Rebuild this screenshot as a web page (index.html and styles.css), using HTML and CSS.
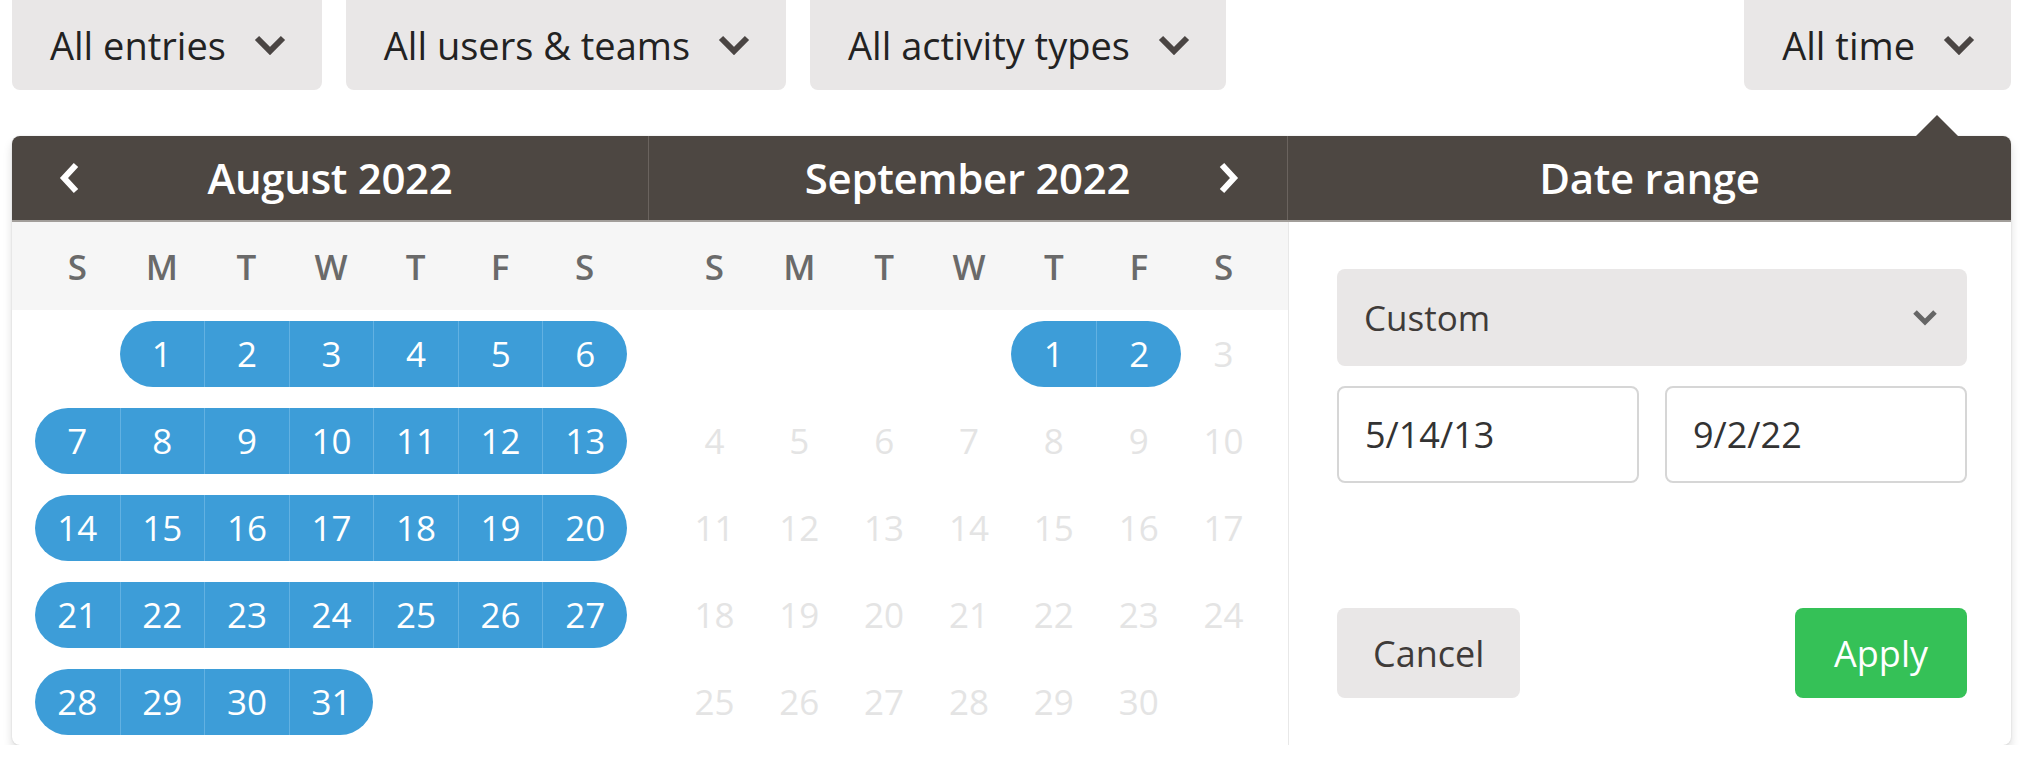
FILE: index.html
```html
<!DOCTYPE html>
<html lang="en">
<head>
<meta charset="utf-8">
<title>Date range filter</title>
<link rel="stylesheet" href="styles.css">
</head>
<body>
<div class="page">
  <div class="toolbar">
    <button class="filter">All entries<svg class="chev" viewBox="0 0 34 20"><polyline points="4,3 17,16 30,3"/></svg></button>
    <button class="filter">All users &amp; teams<svg class="chev" viewBox="0 0 34 20"><polyline points="4,3 17,16 30,3"/></svg></button>
    <button class="filter">All activity types<svg class="chev" viewBox="0 0 34 20"><polyline points="4,3 17,16 30,3"/></svg></button>
    <button class="filter filter-time">All time<svg class="chev" viewBox="0 0 34 20"><polyline points="4,3 17,16 30,3"/></svg></button>
  </div>

  <div class="popover">
    <div class="pop-head">
      <div class="head-cell head-aug">
        <svg class="nav" viewBox="0 0 24 34"><polyline points="18,4 6,17 18,30"/></svg>
        <span class="head-title">August 2022</span>
        <span class="nav-space"></span>
      </div>
      <div class="head-cell head-sep">
        <span class="nav-space"></span>
        <span class="head-title">September 2022</span>
        <svg class="nav" viewBox="0 0 24 34"><polyline points="6,4 18,17 6,30"/></svg>
      </div>
      <div class="head-cell head-range">
        <span class="head-title">Date range</span>
      </div>
    </div>

    <div class="pop-body">
      <div class="month month-aug">
        <div class="weekdays"><span>S</span><span>M</span><span>T</span><span>W</span><span>T</span><span>F</span><span>S</span></div>
        <div class="days">
          <span class="day"></span>
          <span class="day sel start"><b>1</b></span>
          <span class="day sel"><b>2</b></span>
          <span class="day sel"><b>3</b></span>
          <span class="day sel"><b>4</b></span>
          <span class="day sel"><b>5</b></span>
          <span class="day sel end"><b>6</b></span>

          <span class="day sel start"><b>7</b></span>
          <span class="day sel"><b>8</b></span>
          <span class="day sel"><b>9</b></span>
          <span class="day sel"><b>10</b></span>
          <span class="day sel"><b>11</b></span>
          <span class="day sel"><b>12</b></span>
          <span class="day sel end"><b>13</b></span>

          <span class="day sel start"><b>14</b></span>
          <span class="day sel"><b>15</b></span>
          <span class="day sel"><b>16</b></span>
          <span class="day sel"><b>17</b></span>
          <span class="day sel"><b>18</b></span>
          <span class="day sel"><b>19</b></span>
          <span class="day sel end"><b>20</b></span>

          <span class="day sel start"><b>21</b></span>
          <span class="day sel"><b>22</b></span>
          <span class="day sel"><b>23</b></span>
          <span class="day sel"><b>24</b></span>
          <span class="day sel"><b>25</b></span>
          <span class="day sel"><b>26</b></span>
          <span class="day sel end"><b>27</b></span>

          <span class="day sel start"><b>28</b></span>
          <span class="day sel"><b>29</b></span>
          <span class="day sel"><b>30</b></span>
          <span class="day sel end"><b>31</b></span>
        </div>
      </div>

      <div class="month month-sep">
        <div class="weekdays"><span>S</span><span>M</span><span>T</span><span>W</span><span>T</span><span>F</span><span>S</span></div>
        <div class="days">
          <span class="day"></span>
          <span class="day"></span>
          <span class="day"></span>
          <span class="day"></span>
          <span class="day sel start"><b>1</b></span>
          <span class="day sel end"><b>2</b></span>
          <span class="day off">3</span>

          <span class="day off">4</span>
          <span class="day off">5</span>
          <span class="day off">6</span>
          <span class="day off">7</span>
          <span class="day off">8</span>
          <span class="day off">9</span>
          <span class="day off">10</span>

          <span class="day off">11</span>
          <span class="day off">12</span>
          <span class="day off">13</span>
          <span class="day off">14</span>
          <span class="day off">15</span>
          <span class="day off">16</span>
          <span class="day off">17</span>

          <span class="day off">18</span>
          <span class="day off">19</span>
          <span class="day off">20</span>
          <span class="day off">21</span>
          <span class="day off">22</span>
          <span class="day off">23</span>
          <span class="day off">24</span>

          <span class="day off">25</span>
          <span class="day off">26</span>
          <span class="day off">27</span>
          <span class="day off">28</span>
          <span class="day off">29</span>
          <span class="day off">30</span>
        </div>
      </div>

      <div class="range">
        <div class="select">
          <span>Custom</span>
          <svg class="select-chev" viewBox="0 0 28 18"><polyline points="4,3 14,13 24,3"/></svg>
        </div>
        <div class="inputs">
          <div class="input">5/14/13</div>
          <div class="input">9/2/22</div>
        </div>
        <div class="actions">
          <button class="btn btn-cancel">Cancel</button>
          <button class="btn btn-apply">Apply</button>
        </div>
      </div>
    </div>
  </div>
</div>
</body>
</html>
```

FILE: styles.css
```css
* {
  box-sizing: border-box;
}

html, body {
  margin: 0;
  padding: 0;
  background: #ffffff;
}

body {
  font-family: "Open Sans", "Liberation Sans", sans-serif;
  color: #222;
}

.page {
  width: 2024px;
  padding: 0 13px 0 12px;
}

/* ---------- toolbar ---------- */
.toolbar {
  display: flex;
  gap: 24px;
  height: 90px;
}

.filter {
  display: flex;
  align-items: center;
  gap: 27px;
  height: 90px;
  padding: 0 35px 0 38px;
  border: none;
  border-radius: 0 0 8px 8px;
  background: #e9e7e7;
  font-family: inherit;
  font-size: 38px;
  color: #222;
}

.filter-time {
  margin-left: auto;
}

.chev {
  width: 34px;
  height: 20px;
  flex: none;
}

.chev polyline {
  fill: none;
  stroke: #4a4543;
  stroke-width: 6;
  stroke-linecap: butt;
  stroke-linejoin: miter;
}

/* ---------- popover ---------- */
.popover {
  position: relative;
  margin-top: 46px;
  border-radius: 8px;
  background: #fff;
  box-shadow: 0 6px 10px rgba(0, 0, 0, 0.14), 0 0 2px rgba(0, 0, 0, 0.12);
}

.popover::before {
  content: "";
  position: absolute;
  top: -21px;
  right: 53px;
  border-left: 21px solid transparent;
  border-right: 21px solid transparent;
  border-bottom: 21px solid #4d4742;
}

.pop-head {
  display: grid;
  grid-template-columns: 637px 639px 1fr;
  height: 86px;
  background: #4d4742;
  border-bottom: 2px solid #a29e9a;
  border-radius: 8px 8px 0 0;
  color: #fff;
}

.head-cell {
  display: grid;
  align-items: center;
  border-right: 1px solid #6a635e;
}

.head-aug {
  grid-template-columns: 24px 1fr 24px;
  padding: 0 46px 0 46px;
}

.head-sep {
  grid-template-columns: 24px 1fr 24px;
  padding: 0 47px 0 46px;
}

.head-range {
  grid-template-columns: 1fr;
  border-right: none;
}

.head-title {
  text-align: center;
  font-size: 42px;
  font-weight: 600;
  letter-spacing: -0.3px;
  line-height: 1;
}

.nav {
  width: 24px;
  height: 34px;
}

.nav polyline {
  fill: none;
  stroke: #ffffff;
  stroke-width: 6;
}

.pop-body {
  display: grid;
  grid-template-columns: 637px 639px 1fr;
  height: 523px;
  border-radius: 0 0 8px 8px;
  overflow: hidden;
}

.month {
  display: flex;
  flex-direction: column;
}

.weekdays {
  display: grid;
  grid-template-columns: repeat(7, 1fr);
  height: 88px;
  align-items: center;
  padding: 0 22px 0 23px;
  background: #f6f6f6;
  font-size: 35px;
  font-weight: 600;
  color: #6a6a6a;
  text-align: center;
}

.days {
  display: grid;
  grid-template-columns: repeat(7, 1fr);
  grid-auto-rows: 87px;
  padding: 0 22px 0 23px;
}

.day {
  display: flex;
  align-items: center;
  justify-content: center;
  font-size: 35px;
  font-weight: 500;
}

.day.off {
  color: #e4e4e4;
}

.day.sel b {
  display: flex;
  align-items: center;
  justify-content: center;
  width: 100%;
  height: 66px;
  background: #3d9dd8;
  border-left: 1px solid #62b1e2;
  color: #fff;
  font-weight: 500;
}

.day.start b {
  border-left: none;
  border-radius: 33px 0 0 33px;
}

.day.end b {
  border-radius: 0 33px 33px 0;
}

/* ---------- range panel ---------- */
.range {
  display: flex;
  flex-direction: column;
  padding: 47px 44px 47px 48px;
  border-left: 1px solid #e8e8e8;
}

.select {
  display: flex;
  align-items: center;
  justify-content: space-between;
  height: 97px;
  padding: 0 28px 0 27px;
  background: #e9e7e7;
  border-radius: 8px;
  font-size: 35px;
  color: #3f3b39;
}

.select-chev {
  width: 28px;
  height: 18px;
}

.select-chev polyline {
  fill: none;
  stroke: #666;
  stroke-width: 5;
}

.inputs {
  display: grid;
  grid-template-columns: 1fr 1fr;
  gap: 26px;
  margin-top: 20px;
}

.input {
  display: flex;
  align-items: center;
  height: 97px;
  padding: 0 26px;
  border: 2px solid #d6d6d6;
  border-radius: 8px;
  font-size: 36px;
  color: #333;
}

.actions {
  display: flex;
  justify-content: space-between;
  margin-top: auto;
}

.btn {
  height: 90px;
  border: none;
  border-radius: 8px;
  font-family: inherit;
  font-size: 36px;
}

.btn-cancel {
  padding: 0 36px;
  background: #e9e7e7;
  color: #3f3b39;
}

.btn-apply {
  padding: 0 39px;
  background: #35c157;
  color: #fff;
}
```
